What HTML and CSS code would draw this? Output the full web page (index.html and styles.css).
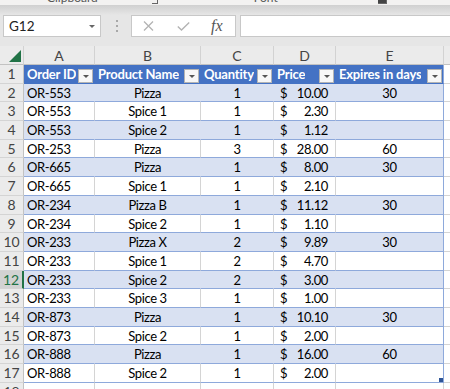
FILE: index.html
```html
<!DOCTYPE html>
<html lang="en">
<head>
  <meta charset="UTF-8">
  <link rel="stylesheet" href="styles.css">
  <title>Orders</title>
</head>
<body>

  <div class="ribbon">
    <span class="group-label clipboard">Clipboard</span>
    <span class="launcher"></span>
    <span class="group-label font-group">Font</span>
    <span class="launcher last-launcher"></span>
  </div>

  <div class="formula-bar">
    <div class="name-box">
      <span>G12</span>
      <span class="caret"></span>
    </div>
    <svg class="grip" width="4" height="12" viewBox="0 0 4 12">
      <rect x="1" y="0" width="2" height="2" fill="#a8a8a8"/>
      <rect x="1" y="5" width="2" height="2" fill="#a8a8a8"/>
      <rect x="1" y="10" width="2" height="2" fill="#a8a8a8"/>
    </svg>
    <div class="fx-box">
      <svg class="cancel" width="11" height="10" viewBox="0 0 11 10">
        <path d="M1 0.5 L10 9.5 M10 0.5 L1 9.5" stroke="#b3b3b3" stroke-width="1.3" fill="none"/>
      </svg>
      <svg class="enter" width="13" height="9" viewBox="0 0 13 9">
        <path d="M0.8 4.5 L4.5 8 L12.2 0.6" stroke="#b3b3b3" stroke-width="1.4" fill="none"/>
      </svg>
      <i class="fx">fx</i>
    </div>
    <div class="formula-input"></div>
  </div>

  <div class="sheet">
    <div class="row col-heads">
      <div class="corner">
        <svg width="12" height="12" viewBox="0 0 12 12"><polygon points="12,0 12,12 0,12" fill="#217346"/></svg>
      </div>
      <div>A</div><div>B</div><div>C</div><div>D</div><div>E</div><div class="out"></div>
    </div>

    <div class="row head">
      <div class="rh">1</div>
      <div class="c"><span>Order ID</span><span class="filter"></span></div>
      <div class="c"><span>Product Name</span><span class="filter"></span></div>
      <div class="c"><span>Quantity</span><span class="filter"></span></div>
      <div class="c"><span>Price</span><span class="filter"></span></div>
      <div class="c last"><span>Expires in days</span><span class="filter"></span></div>
      <div class="out"></div>
    </div>

    <div class="row band">
      <div class="rh">2</div><div class="c">OR-553</div><div class="c mid">Pizza</div><div class="c mid">1</div>
      <div class="c price"><span>$</span><span>10.00</span></div><div class="c mid last">30</div><div class="out"></div>
    </div>
    <div class="row">
      <div class="rh">3</div><div class="c">OR-553</div><div class="c mid">Spice 1</div><div class="c mid">1</div>
      <div class="c price"><span>$</span><span>2.30</span></div><div class="c mid last"></div><div class="out"></div>
    </div>
    <div class="row band">
      <div class="rh">4</div><div class="c">OR-553</div><div class="c mid">Spice 2</div><div class="c mid">1</div>
      <div class="c price"><span>$</span><span>1.12</span></div><div class="c mid last"></div><div class="out"></div>
    </div>
    <div class="row">
      <div class="rh">5</div><div class="c">OR-253</div><div class="c mid">Pizza</div><div class="c mid">3</div>
      <div class="c price"><span>$</span><span>28.00</span></div><div class="c mid last">60</div><div class="out"></div>
    </div>
    <div class="row band">
      <div class="rh">6</div><div class="c">OR-665</div><div class="c mid">Pizza</div><div class="c mid">1</div>
      <div class="c price"><span>$</span><span>8.00</span></div><div class="c mid last">30</div><div class="out"></div>
    </div>
    <div class="row">
      <div class="rh">7</div><div class="c">OR-665</div><div class="c mid">Spice 1</div><div class="c mid">1</div>
      <div class="c price"><span>$</span><span>2.10</span></div><div class="c mid last"></div><div class="out"></div>
    </div>
    <div class="row band">
      <div class="rh">8</div><div class="c">OR-234</div><div class="c mid">Pizza B</div><div class="c mid">1</div>
      <div class="c price"><span>$</span><span>11.12</span></div><div class="c mid last">30</div><div class="out"></div>
    </div>
    <div class="row">
      <div class="rh">9</div><div class="c">OR-234</div><div class="c mid">Spice 2</div><div class="c mid">1</div>
      <div class="c price"><span>$</span><span>1.10</span></div><div class="c mid last"></div><div class="out"></div>
    </div>
    <div class="row band">
      <div class="rh">10</div><div class="c">OR-233</div><div class="c mid">Pizza X</div><div class="c mid">2</div>
      <div class="c price"><span>$</span><span>9.89</span></div><div class="c mid last">30</div><div class="out"></div>
    </div>
    <div class="row">
      <div class="rh">11</div><div class="c">OR-233</div><div class="c mid">Spice 1</div><div class="c mid">2</div>
      <div class="c price"><span>$</span><span>4.70</span></div><div class="c mid last"></div><div class="out"></div>
    </div>
    <div class="row band">
      <div class="rh selected">12</div><div class="c">OR-233</div><div class="c mid">Spice 2</div><div class="c mid">2</div>
      <div class="c price"><span>$</span><span>3.00</span></div><div class="c mid last"></div><div class="out"></div>
    </div>
    <div class="row">
      <div class="rh">13</div><div class="c">OR-233</div><div class="c mid">Spice 3</div><div class="c mid">1</div>
      <div class="c price"><span>$</span><span>1.00</span></div><div class="c mid last"></div><div class="out"></div>
    </div>
    <div class="row band">
      <div class="rh">14</div><div class="c">OR-873</div><div class="c mid">Pizza</div><div class="c mid">1</div>
      <div class="c price"><span>$</span><span>10.10</span></div><div class="c mid last">30</div><div class="out"></div>
    </div>
    <div class="row">
      <div class="rh">15</div><div class="c">OR-873</div><div class="c mid">Spice 2</div><div class="c mid">1</div>
      <div class="c price"><span>$</span><span>2.00</span></div><div class="c mid last"></div><div class="out"></div>
    </div>
    <div class="row band">
      <div class="rh">16</div><div class="c">OR-888</div><div class="c mid">Pizza</div><div class="c mid">1</div>
      <div class="c price"><span>$</span><span>16.00</span></div><div class="c mid last">60</div><div class="out"></div>
    </div>
    <div class="row">
      <div class="rh">17</div><div class="c">OR-888</div><div class="c mid">Spice 2</div><div class="c mid">1</div>
      <div class="c price"><span>$</span><span>2.00</span></div><div class="c mid last"><span class="resize"></span></div><div class="out"></div>
    </div>
    <div class="row blank">
      <div class="rh">18</div><div></div><div></div><div></div><div></div><div></div><div class="out"></div>
    </div>
  </div>

</body>
</html>
```

FILE: styles.css
```css
body {
  margin: 0;
  height: 389px;
  overflow: hidden;
  background-color: #e6e6e6;
  font-family: Lato, 'Liberation Sans', sans-serif;
}

/* ribbon, only its bottom edge shows */
.ribbon {
  display: flex;
  height: 5px;
  overflow: hidden;
  background-color: #f3f2f1;
}

.group-label {
  margin-top: -9px;
  font-size: 12px;
  line-height: 14px;
  color: #555;
}

.clipboard {
  margin-left: 47px;
}

.launcher {
  width: 5px;
  height: 3px;
  margin-left: 54px;
  border-right: 1px solid #666;
  border-bottom: 1px solid #666;
}

.font-group {
  margin-left: 96px;
}

.last-launcher {
  margin-left: 100px;
  width: 8px;
  background-color: #444;
}

/* formula bar */
.formula-bar {
  display: flex;
  align-items: center;
  height: 41px;
  padding-top: 10px;
  padding-bottom: 9px;
  box-sizing: border-box;
  background: linear-gradient(#d0d0d0, #e6e6e6 10px);
}

.name-box {
  display: flex;
  align-items: center;
  justify-content: space-between;
  width: 98px;
  height: 22px;
  margin-left: 3px;
  padding: 0 5px;
  box-sizing: border-box;
  background-color: #fff;
  border: 1px solid #c8c8c8;
  font-size: 13.5px;
  color: #222;
}

.caret {
  width: 0;
  height: 0;
  border-left: 3px solid transparent;
  border-right: 3px solid transparent;
  border-top: 3px solid #666;
}

.grip {
  margin-left: 14px;
}

.fx-box {
  display: flex;
  align-items: center;
  width: 105px;
  height: 22px;
  margin-left: 12px;
  box-sizing: border-box;
  background-color: #fff;
  border: 1px solid #c8c8c8;
}

.cancel {
  margin-left: 11px;
}

.enter {
  margin-left: 23px;
}

.fx {
  margin-left: 21px;
  font-family: 'Liberation Serif', serif;
  font-size: 16px;
  color: #555;
}

.formula-input {
  flex: 1;
  height: 22px;
  margin-left: 4px;
  box-sizing: border-box;
  background-color: #fff;
  border: 1px solid #c8c8c8;
  border-right: none;
}

/* grid */
.sheet {
  background-color: #fff;
}

.row {
  display: grid;
  grid-template-columns: 24px 71px 106px 73px 62px 108px 1fr;
  height: 18.69px;
  font-size: 13px;
  letter-spacing: -0.4px;
  color: #000;
}

.row > div {
  box-sizing: border-box;
  overflow: hidden;
  white-space: nowrap;
  line-height: 18px;
  padding: 0 3px;
  border-bottom: 1px solid #8ea9db;
  border-right: 1px solid #d4d4d4;
}

.row > .out {
  border-bottom-color: #d4d4d4;
  border-right: none;
}

.col-heads {
  height: 19px;
}

.col-heads > div {
  padding-top: 1px;
  text-align: center;
  color: #444;
  background-color: #ebebeb;
  border-bottom-color: #c2c2c2;
  border-right-color: #d2d2d2;
  font-size: 14px;
  letter-spacing: 0;
}

.col-heads > .out {
  background-color: #ebebeb;
  border-bottom-color: #c2c2c2;
}

.col-heads .corner {
  display: flex;
  justify-content: flex-end;
  align-items: flex-end;
  padding: 0 2px 2px 0;
}

.rh {
  text-align: center;
  color: #444;
  background-color: #ebebeb;
  font-size: 14px;
}

.row > .rh {
  padding: 0;
  letter-spacing: -0.2px;
  border-bottom-color: #d4d4d4;
  border-right-color: #c2c2c2;
}

.row > .selected {
  background-color: #d2d2d2;
  color: #217346;
  border-right: 2px solid #217346;
}

.head > .c {
  display: flex;
  align-items: flex-end;
  justify-content: space-between;
  padding: 0 1px 0 3px;
  background-color: #4472c4;
  color: #fff;
  font-weight: 700;
  letter-spacing: -0.2px;
  border-bottom-color: #4472c4;
  border-right-color: #4472c4;
}

.head > .c > span:first-child {
  align-self: center;
  overflow: hidden;
}

.filter {
  flex: none;
  position: relative;
  width: 15px;
  height: 14px;
  box-sizing: border-box;
  background-color: #f7f7f7;
  border: 1px solid #b4b4b4;
}

.filter::after {
  content: "";
  position: absolute;
  left: 4px;
  top: 5px;
  border-left: 3px solid transparent;
  border-right: 3px solid transparent;
  border-top: 3px solid #555;
}

.band > .c {
  background-color: #d9e1f2;
  border-right-color: #d9e1f2;
}

.mid {
  text-align: center;
}

.row > .price {
  display: flex;
  justify-content: space-between;
  padding: 0 7px 0 6px;
}

.row > .last {
  position: relative;
  border-right-color: #8ea9db;
}

.head > .last {
  border-right-color: #8ea9db;
}

.blank > div {
  border-bottom-color: #d4d4d4;
}

.resize {
  position: absolute;
  right: 0;
  bottom: 0;
  width: 4px;
  height: 4px;
  background-color: #2f5597;
}
```
